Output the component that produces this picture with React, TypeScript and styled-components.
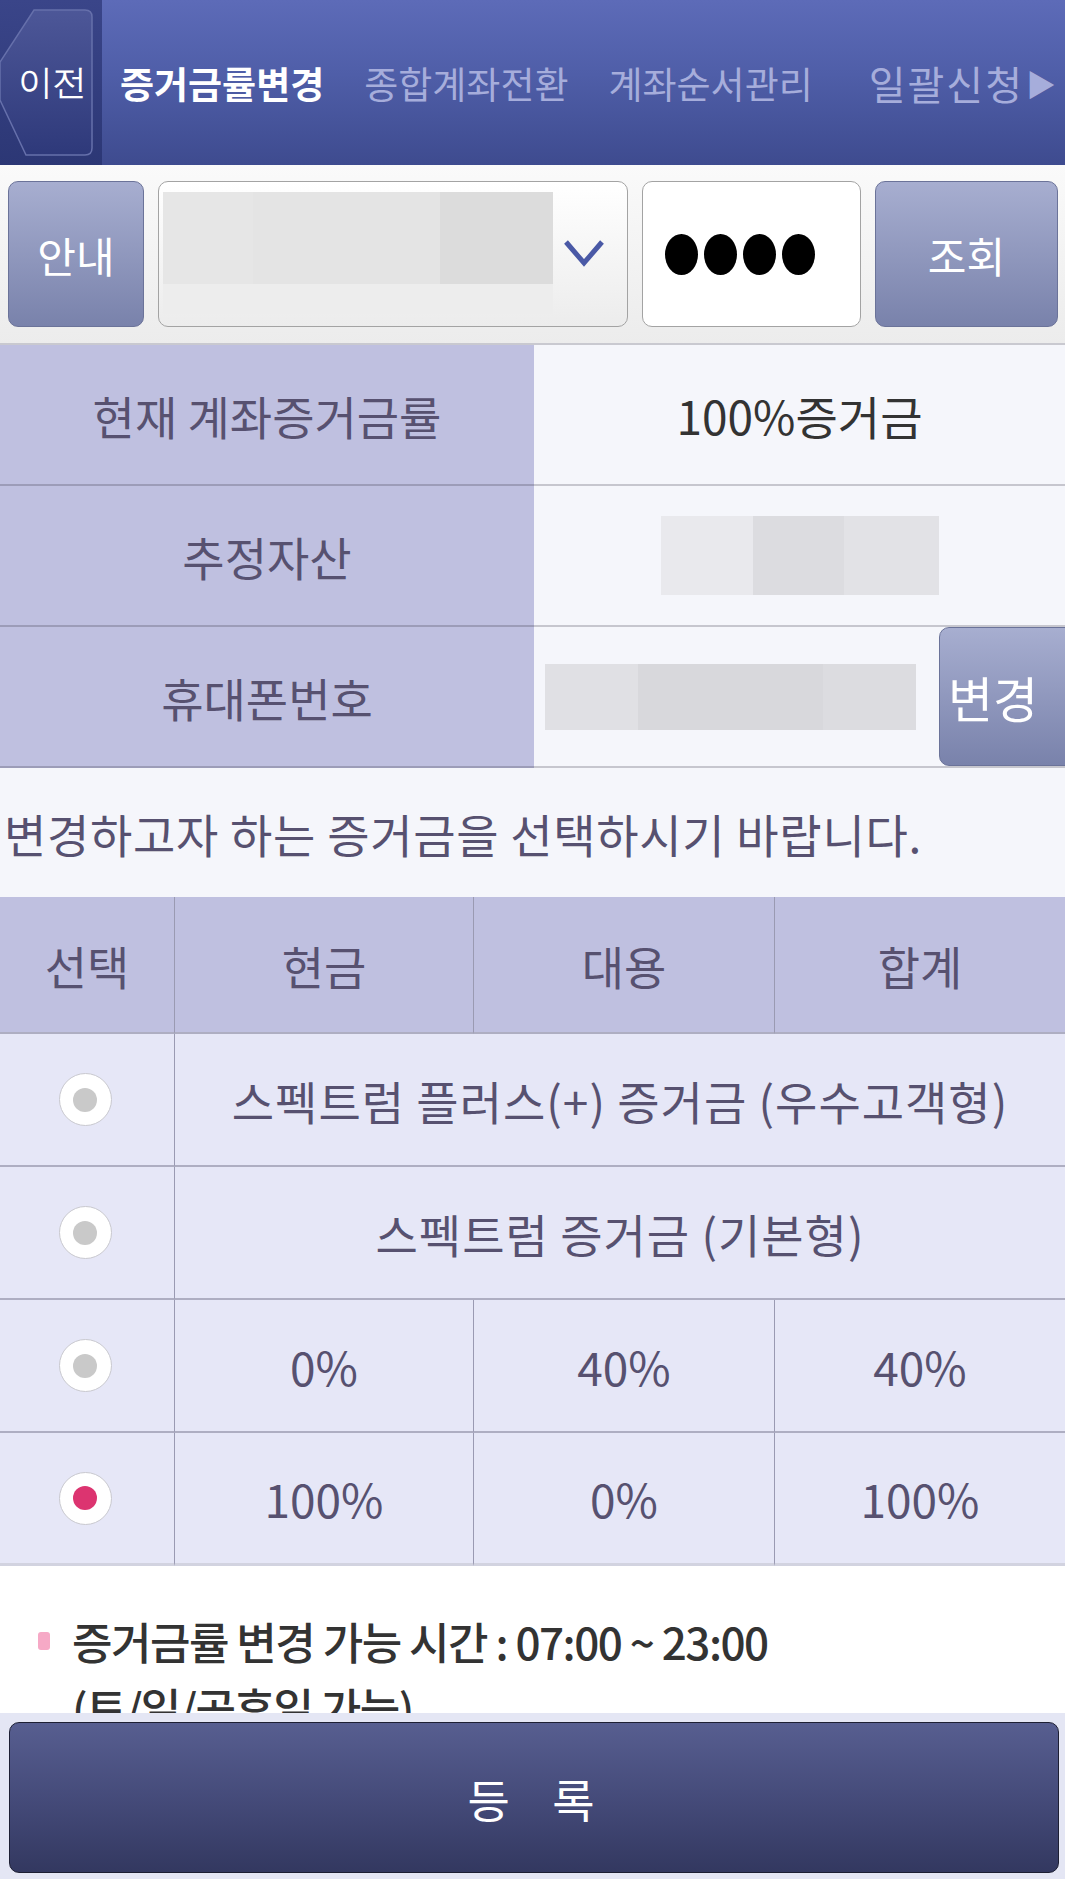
import React from "react";
import styled, { createGlobalStyle } from "styled-components";

const GlobalStyle = createGlobalStyle`
  html, body { margin: 0; padding: 0; background: #ffffff; }
  body { font-family: "Noto Sans CJK KR", "Noto Sans", sans-serif; }
  * { box-sizing: border-box; }
`;

const Page = styled.div`
  width: 1065px;
  height: 1879px;
  overflow: hidden;
  display: flex;
  flex-direction: column;
`;

/* ---------- header ---------- */
const Header = styled.header`
  height: 165px;
  display: flex;
  background: linear-gradient(#5d6bb8 0%, #4f5ea8 45%, #3e4b8f 100%);
`;

const BackPanel = styled.div`
  width: 102px;
  flex: none;
  display: flex;
  align-items: center;
  background: linear-gradient(#3a4589, #2c3775);
`;

const BackButton = styled.button`
  position: relative;
  width: 102px;
  height: 165px;
  border: 0;
  padding: 0 0 0 2px;
  background: none;
  display: flex;
  align-items: center;
  justify-content: center;
  cursor: pointer;
`;

const BackShape = styled.svg`
  position: absolute;
  inset: 0;
`;

const BackLabel = styled.span`
  position: relative;
  color: #ffffff;
  font-size: 35px;
  letter-spacing: -1px;
`;

const Tabs = styled.nav`
  flex: 1;
  display: flex;
  align-items: center;
  padding-left: 18px;
  gap: 40px;
  white-space: nowrap;
  overflow: hidden;
`;

const Tab = styled.span<{ $active?: boolean; $wide?: boolean }>`
  font-size: ${(p) => (p.$wide ? "40px" : "37px")};
  letter-spacing: ${(p) => (p.$wide ? "2px" : "0")};
  margin-left: ${(p) => (p.$wide ? "16px" : "0")};
  color: ${(p) => (p.$active ? "#ffffff" : "#a6addb")};
  font-weight: ${(p) => (p.$active ? 700 : 400)};
`;

const TabArrow = styled.span`
  color: #a6addb;
  font-size: 30px;
  margin-left: -38px;
`;

/* ---------- search bar ---------- */
const SearchBar = styled.div`
  height: 180px;
  display: flex;
  align-items: flex-start;
  gap: 14px;
  padding: 16px 6px 0 8px;
  background: linear-gradient(#fafafa, #ececec);
  border-bottom: 2px solid #c9c9d0;
`;

const BlueButton = styled.button<{ $w: number }>`
  width: ${(p) => p.$w}px;
  height: 146px;
  flex: none;
  border: 1px solid #6b7399;
  border-radius: 10px;
  background: linear-gradient(#a7aed0, #7982ab);
  color: #ffffff;
  font-family: inherit;
  font-size: 42px;
  display: flex;
  align-items: center;
  justify-content: center;
`;

const SelectBox = styled.div`
  width: 470px;
  height: 146px;
  flex: none;
  border: 1px solid #a3a3a3;
  border-radius: 10px;
  background: linear-gradient(#ffffff, #ececec);
  display: flex;
  align-items: center;
  padding: 10px 22px 12px 4px;
  gap: 10px;
`;

const Redacted = styled.div<{ $w: number; $h: number; $stops: string }>`
  width: ${(p) => p.$w}px;
  height: ${(p) => p.$h}px;
  flex: none;
  background: linear-gradient(90deg, ${(p) => p.$stops});
`;

const SelectValue = styled.div`
  flex: none;
  align-self: stretch;
  display: flex;
  flex-direction: column;
  background: #ededed;
`;

const Chevron = styled.svg`
  flex: none;
  margin-left: auto;
`;

const PasswordBox = styled.div`
  width: 219px;
  height: 146px;
  flex: none;
  border: 1px solid #a3a3a3;
  border-radius: 10px;
  background: #ffffff;
  display: flex;
  align-items: center;
  padding-left: 22px;
  gap: 6px;
`;

const Dot = styled.span`
  width: 33px;
  height: 41px;
  border-radius: 50%;
  background: #000000;
`;

/* ---------- info table ---------- */
const InfoTable = styled.section`
  display: flex;
  flex-direction: column;
`;

const InfoRow = styled.div`
  height: 141px;
  display: grid;
  grid-template-columns: 534px 1fr;
`;

const InfoLabel = styled.div`
  background: #bfc0e0;
  border-bottom: 2px solid #9c9cb8;
  color: #575170;
  font-size: 46px;
  display: flex;
  align-items: center;
  justify-content: center;
`;

const InfoValue = styled.div`
  background: #f5f6fb;
  border-bottom: 2px solid #c6c6ce;
  color: #333333;
  font-size: 46px;
  display: flex;
  align-items: center;
  justify-content: center;
`;

const PhoneValue = styled(InfoValue)`
  justify-content: space-between;
  padding-left: 11px;
  align-items: stretch;
`;

const PhoneMask = styled.div`
  display: flex;
  align-items: center;
`;

const ChangeButton = styled.button`
  width: 131px;
  margin-right: -5px;
  border: 1px solid #6b7399;
  border-radius: 10px 0 0 10px;
  background: linear-gradient(#a7aed0, #7982ab);
  color: #ffffff;
  font-family: inherit;
  font-size: 49px;
  padding: 0 0 0 8px;
  text-align: left;
  white-space: nowrap;
  overflow: hidden;
`;

/* ---------- guide ---------- */
const Guide = styled.p`
  margin: 0;
  height: 129px;
  display: flex;
  align-items: center;
  padding-left: 4px;
  background: #f5f6fb;
  color: #575170;
  font-size: 46px;
  letter-spacing: 0.7px;
  white-space: nowrap;
`;

/* ---------- choice table ---------- */
const ChoiceTable = styled.section`
  display: grid;
  grid-template-columns: 175px 299px 301px 1fr;
  grid-template-rows: 137px repeat(4, 133px);
  background: #e6e7f7;
`;

const Cell = styled.div<{ $head?: boolean; $span?: number; $last?: boolean; $end?: boolean }>`
  grid-column: span ${(p) => p.$span ?? 1};
  background: ${(p) => (p.$head ? "#bfc0e0" : "#e6e7f7")};
  border-right: ${(p) => (p.$end ? "0" : "1px solid #9a9ab2")};
  border-bottom: ${(p) => (p.$last ? "3px solid #d2d3e0" : "2px solid #aeaec2")};
  color: #575170;
  font-size: 46px;
  letter-spacing: ${(p) => ((p.$span ?? 1) > 1 ? "1px" : "0")};
  display: flex;
  align-items: center;
  justify-content: center;
  white-space: nowrap;
`;

const Radio = styled.span<{ $checked?: boolean }>`
  width: 53px;
  height: 53px;
  margin-right: 4px;
  border-radius: 50%;
  background: #ffffff;
  border: 1px solid #c9c9cf;
  display: flex;
  align-items: center;
  justify-content: center;
  &::after {
    content: "";
    width: 24px;
    height: 24px;
    border-radius: 50%;
    background: ${(p) => (p.$checked ? "#dc3470" : "#c9c9c9")};
  }
`;

/* ---------- notes ---------- */
const Notes = styled.section`
  height: 147px;
  overflow: hidden;
  background: #ffffff;
  padding: 42px 0 0 38px;
`;

const NoteLine = styled.div`
  display: flex;
  align-items: center;
  gap: 22px;
  color: #333333;
  font-size: 44px;
  font-weight: 500;
  letter-spacing: -1.5px;
  line-height: 66px;
`;

const NoteSub = styled.div`
  padding-left: 34px;
  color: #333333;
  font-size: 44px;
  font-weight: 500;
  letter-spacing: -1.5px;
  line-height: 66px;
`;

const Bullet = styled.span`
  width: 12px;
  height: 18px;
  border-radius: 3px;
  background: #f6a9c6;
  flex: none;
`;

/* ---------- footer ---------- */
const Footer = styled.footer`
  height: 166px;
  background: #e4e6f4;
  padding: 9px 6px 0 9px;
`;

const SubmitButton = styled.button`
  width: 100%;
  height: 151px;
  border: 1.5px solid #1d1f33;
  border-radius: 10px;
  background: linear-gradient(#575e90, #454b7a 50%, #333860);
  color: #ffffff;
  font-family: inherit;
  font-size: 46px;
  letter-spacing: 16px;
  padding-left: 16px;
`;

const rows: { cells: string[]; checked?: boolean }[] = [
  { cells: ["스펙트럼 플러스(+) 증거금 (우수고객형)"] },
  { cells: ["스펙트럼 증거금 (기본형)"] },
  { cells: ["0%", "40%", "40%"] },
  { cells: ["100%", "0%", "100%"], checked: true },
];

export default function App() {
  return (
    <Page>
      <GlobalStyle />
      <Header>
        <BackPanel>
          <BackButton>
            <BackShape width="102" height="165" viewBox="0 0 102 165">
              <defs>
                <linearGradient id="bk" x1="0" y1="0" x2="0" y2="1">
                  <stop offset="0" stopColor="#4d5798" />
                  <stop offset="1" stopColor="#2e397a" />
                </linearGradient>
              </defs>
              <path
                d="M34 10 H85 Q92 10 92 17 V148 Q92 155 85 155 H26 L0 100 V62 Z"
                fill="url(#bk)"
                stroke="#6670ab"
                strokeWidth="1.5"
              />
            </BackShape>
            <BackLabel>이전</BackLabel>
          </BackButton>
        </BackPanel>
        <Tabs>
          <Tab $active>증거금률변경</Tab>
          <Tab>종합계좌전환</Tab>
          <Tab>계좌순서관리</Tab>
          <Tab $wide>일괄신청</Tab>
          <TabArrow>▶</TabArrow>
        </Tabs>
      </Header>

      <SearchBar>
        <BlueButton $w={136}>안내</BlueButton>
        <SelectBox>
          <SelectValue>
            <Redacted $w={390} $h={92} $stops="#e6e6e6 0 23%, #e4e4e4 23% 71%, #dcdcdc 71% 100%" />
          </SelectValue>
          <Chevron width="42" height="30" viewBox="0 0 42 30">
            <path d="M3 4 L21 25 L39 4" fill="none" stroke="#4a59a6" strokeWidth="5" />
          </Chevron>
        </SelectBox>
        <PasswordBox>
          <Dot />
          <Dot />
          <Dot />
          <Dot />
        </PasswordBox>
        <BlueButton $w={183}>조회</BlueButton>
      </SearchBar>

      <InfoTable>
        <InfoRow>
          <InfoLabel>현재 계좌증거금률</InfoLabel>
          <InfoValue>100%증거금</InfoValue>
        </InfoRow>
        <InfoRow>
          <InfoLabel>추정자산</InfoLabel>
          <InfoValue>
            <Redacted $w={278} $h={79} $stops="#e9e9ed 0 33%, #dcdce0 33% 66%, #e2e2e6 66% 100%" />
          </InfoValue>
        </InfoRow>
        <InfoRow>
          <InfoLabel>휴대폰번호</InfoLabel>
          <PhoneValue>
            <PhoneMask>
              <Redacted $w={371} $h={66} $stops="#e0e0e4 0 25%, #d8d8dc 25% 75%, #dcdce0 75% 100%" />
            </PhoneMask>
            <ChangeButton>변경</ChangeButton>
          </PhoneValue>
        </InfoRow>
      </InfoTable>

      <Guide>변경하고자 하는 증거금을 선택하시기 바랍니다.</Guide>

      <ChoiceTable>
        <Cell $head>선택</Cell>
        <Cell $head>현금</Cell>
        <Cell $head>대용</Cell>
        <Cell $head $end>합계</Cell>
        {rows.map((row, i) => (
          <React.Fragment key={i}>
            <Cell $last={i === rows.length - 1}>
              <Radio $checked={row.checked} />
            </Cell>
            {row.cells.map((c, j) => (
              <Cell
                key={j}
                $span={row.cells.length === 1 ? 3 : 1}
                $end={j === row.cells.length - 1}
                $last={i === rows.length - 1}
              >
                {c}
              </Cell>
            ))}
          </React.Fragment>
        ))}
      </ChoiceTable>

      <Notes>
        <NoteLine>
          <Bullet />
          증거금률 변경 가능 시간 : 07:00 ~ 23:00
        </NoteLine>
        <NoteSub>(토/일/공휴일 가능)</NoteSub>
      </Notes>

      <Footer>
        <SubmitButton>등 록</SubmitButton>
      </Footer>
    </Page>
  );
}
